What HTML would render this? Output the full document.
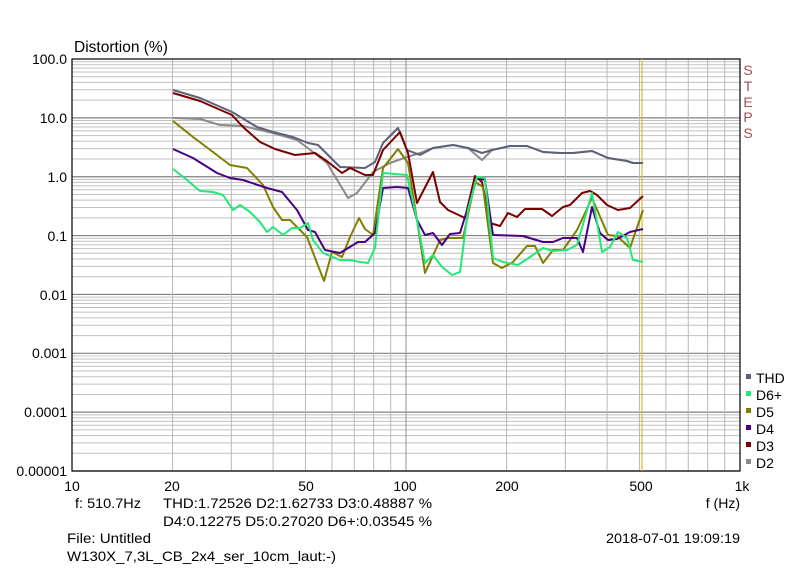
<!DOCTYPE html>
<html><head><meta charset="utf-8"><style>
body{margin:0;background:#fff;width:800px;height:568px;overflow:hidden;font-family:"Liberation Sans",Arial,sans-serif}
svg{position:absolute;left:0;top:0}
</style></head><body>
<svg id="s" width="800" height="568" xmlns="http://www.w3.org/2000/svg" font-family="Liberation Sans, Arial, sans-serif" font-size="14" fill="#000" xml:space="preserve">
<g id="grid"></g>
<rect x="72" y="59" width="668" height="412" fill="none" stroke="#000" stroke-width="1.2"/>
<line x1="642" y1="59" x2="642" y2="471" stroke="#d8c020" stroke-width="1.2"/>
<g fill="none" stroke-width="2" stroke-linejoin="round">
<polyline stroke="#8a8a8a" points="173,118 200,119 220,125 243,126 273,133 297,140 313,152 327,163 348,198 357,193 373,172 390,163 407,157 420,153 433,148 453,145 468,148 482,160 492,150 510,146 527,146 543,152 560,153 573,153 592,151 608,158 627,161 633,163 643,163"/>
<polyline stroke="#5c6078" points="173,90 200,98 232,112 257,127 273,132 293,137 308,143 318,145 340,167 365,168 375,162 383,143 398,128 407,150 420,155 433,148 453,145 468,148 482,153 492,150 510,146 527,146 543,152 560,153 573,153 592,151 608,158 627,161 633,163 643,163"/>
<polyline stroke="#7a0000" points="173,93 200,101 232,115 243,127 260,142 275,149 295,155 315,153 328,162 342,173 350,168 365,175 373,175 383,150 400,132 408,153 417,203 433,172 440,202 448,210 465,218 475,176 482,182 490,223 500,226 508,213 517,217 525,209 542,209 552,216 563,207 570,205 582,193 590,191 597,195 607,205 618,210 630,208 643,196"/>
<polyline stroke="#808000" points="173,121 193,137 213,152 230,165 247,168 263,185 273,207 282,220 290,220 307,237 317,263 324,281 332,252 342,257 350,237 359,218 365,229 373,235 383,168 398,149 408,163 417,220 425,273 440,240 448,238 463,238 475,182 483,187 493,263 502,268 513,262 527,246 535,246 543,263 553,250 563,250 577,230 592,198 608,235 617,236 630,248 643,210"/>
<polyline stroke="#4b0082" points="173,149 193,158 217,173 230,178 243,180 267,188 282,192 297,210 308,230 315,232 325,250 340,253 358,242 365,242 375,233 383,188 397,187 408,188 417,220 425,235 433,233 442,245 450,234 460,233 477,178 485,180 493,235 523,236 533,239 543,242 553,242 563,238 577,238 583,252 592,207 600,233 608,240 617,239 630,232 643,229"/>
<polyline stroke="#22e878" points="173,169 187,180 200,191 213,192 223,195 233,210 240,205 250,212 260,222 267,232 273,227 283,235 292,228 300,228 308,223 313,240 323,253 340,260 350,260 360,262 368,263 375,248 383,173 407,175 417,220 425,263 433,255 442,267 452,275 460,272 468,210 477,177 485,178 493,258 503,262 518,265 530,257 543,248 553,251 567,250 577,245 592,193 602,252 610,247 618,232 627,238 633,260 643,262"/>
</g>
<text x="74" y="52" font-size="15.5">Distortion (%)</text>
<g text-anchor="end">
<text x="67" y="64">100.0</text><text x="67" y="123">10.0</text><text x="67" y="182">1.0</text><text x="67" y="241">0.1</text><text x="67" y="300">0.01</text><text x="67" y="358">0.001</text><text x="67" y="417">0.0001</text><text x="67" y="476">0.00001</text>
</g>
<g text-anchor="middle">
<text x="72" y="491">10</text><text x="172" y="491">20</text><text x="306" y="491">50</text><text x="405" y="491">100</text><text x="507" y="491">200</text><text x="641" y="491">500</text><text x="742" y="491">1k</text>
</g>
<text x="740" y="508" text-anchor="end">f (Hz)</text>
<g fill="#a05050" font-size="14" text-anchor="middle">
<text x="748" y="75">S</text><text x="748" y="91">T</text><text x="748" y="107">E</text><text x="748" y="122">P</text><text x="748" y="138">S</text>
</g>
<g>
<rect x="746" y="374" width="5" height="5" fill="#5c6078"/><text x="756" y="383">THD</text>
<rect x="746" y="391" width="5" height="5" fill="#22e878"/><text x="756" y="400">D6+</text>
<rect x="746" y="408" width="5" height="5" fill="#808000"/><text x="756" y="417">D5</text>
<rect x="746" y="425" width="5" height="5" fill="#4b0082"/><text x="756" y="434">D4</text>
<rect x="746" y="442" width="5" height="5" fill="#7a0000"/><text x="756" y="451">D3</text>
<rect x="746" y="459" width="5" height="5" fill="#8a8a8a"/><text x="756" y="468">D2</text>
</g>
<text x="75" y="508" textLength="66" lengthAdjust="spacingAndGlyphs">f: 510.7Hz</text>
<text x="163" y="508" textLength="269" lengthAdjust="spacingAndGlyphs">THD:1.72526  D2:1.62733  D3:0.48887 %</text>
<text x="163" y="526" textLength="269" lengthAdjust="spacingAndGlyphs">D4:0.12275  D5:0.27020  D6+:0.03545 %</text>
<text x="67" y="543" textLength="84" lengthAdjust="spacingAndGlyphs">File: Untitled</text>
<text x="606" y="543" textLength="134" lengthAdjust="spacingAndGlyphs">2018-07-01 19:09:19</text>
<text x="67" y="561" textLength="269" lengthAdjust="spacingAndGlyphs">W130X_7,3L_CB_2x4_ser_10cm_laut:-)</text>
</svg>
<script>
var g=document.getElementById('grid'),h='';
function L(x1,y1,x2,y2,c,w){h+='<line x1="'+x1+'" y1="'+y1+'" x2="'+x2+'" y2="'+y2+'" stroke="'+c+'" stroke-width="'+w+'"/>';}
var X0=72,DX=334,Y0=59,DY=58.86;
for(var d=0;d<7;d++){for(var k=1;k<10;k++){var y=Y0+DY*(d+1)-DY*Math.log10(k);if(k==1){y=Y0+DY*(d+1);L(72,y,740,y,'#808080',1.2);}else L(72,y,740,y,'#c0c0c0',1);}}
for(var d=0;d<2;d++){for(var k=2;k<10;k++){var x=X0+DX*d+DX*Math.log10(k);L(x,59,x,471,'#b8b8b8',1);}}
L(X0+DX,59,X0+DX,471,'#909090',1);
g.innerHTML=h;
</script>
</body></html>
